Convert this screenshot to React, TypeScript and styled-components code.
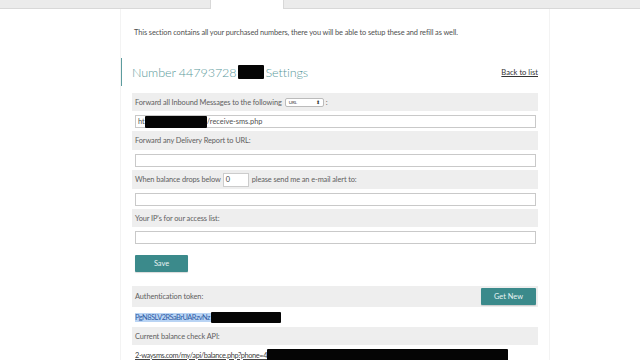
import styled, { createGlobalStyle } from "styled-components";

const GlobalStyle = createGlobalStyle`
  body {
    margin: 0;
    background: #fff;
    font-family: Lato, "Open Sans", sans-serif;
    color: #555;
  }
`;

const TabBar = styled.div`
  display: flex;
  height: 9px;
`;

const Tab = styled.div<{ $active?: boolean; $width?: number }>`
  flex: ${(p) => (p.$width ? `0 0 ${p.$width}px` : "1 1 auto")};
  box-sizing: border-box;
  background: ${(p) => (p.$active ? "#fff" : "#ebebeb")};
  border-bottom: ${(p) => (p.$active ? "none" : "1px solid #d8d8d8")};
  border-left: ${(p) => (p.$active ? "1px solid #d8d8d8" : "none")};
  border-right: ${(p) => (p.$active ? "1px solid #d8d8d8" : "none")};
`;

const Card = styled.div`
  box-sizing: border-box;
  width: 430px;
  margin-left: 120px;
  padding: 0 11px 0 11px;
  border-left: 1px solid #f3f3f3;
  border-right: 1px solid #f3f3f3;
`;

const Intro = styled.p`
  margin: 0;
  padding: 19px 0 0 2px;
  font-size: 7.4px;
  line-height: 10px;
  color: #505050;
  letter-spacing: -0.1px;
`;

const Header = styled.div`
  display: flex;
  align-items: center;
  justify-content: space-between;
  margin: 20px 0 0 -11px;
  padding-left: 10px;
  height: 28px;
  border-left: 1px solid #5c9c9e;
`;

const Title = styled.h2`
  display: flex;
  align-items: center;
  margin: 0;
  font-size: 12.6px;
  font-weight: 300;
  color: #5a999b;
  letter-spacing: -0.1px;
`;

const Redact = styled.span<{ $w: number; $h: number }>`
  display: inline-block;
  width: ${(p) => p.$w}px;
  height: ${(p) => p.$h}px;
  background: #050505;
  border-radius: 1px;
`;

const TitleRedact = styled(Redact)`
  margin: 0 2px 0 1px;
`;

const BackLink = styled.a`
  font-size: 7.6px;
  color: #333;
  text-decoration: underline;
`;

const Form = styled.div`
  display: flex;
  flex-direction: column;
  margin-top: 7px;
`;

const LabelRow = styled.div<{ $h?: number }>`
  display: flex;
  align-items: center;
  justify-content: space-between;
  height: ${(p) => p.$h ?? 18}px;
  padding: 0 2px 0 3px;
  background: #eeeeee;
  font-size: 7.4px;
  color: #606060;
  letter-spacing: -0.1px;
`;

const Inline = styled.span`
  display: flex;
  align-items: center;
`;

const InputRow = styled.div`
  padding: 4px 2px 3px 3px;
`;

const TextBox = styled.div`
  display: flex;
  align-items: center;
  box-sizing: border-box;
  height: 13px;
  padding-left: 2px;
  border: 1px solid #c9c9c9;
  background: #fff;
  font-size: 7.4px;
  color: #505050;
`;

const SelectBox = styled.span`
  display: inline-flex;
  align-items: center;
  justify-content: space-between;
  box-sizing: border-box;
  width: 39px;
  height: 9px;
  margin: 0 2px 0 3px;
  padding: 0 3px;
  border: 1px solid #bbb;
  border-radius: 2px;
  background: #fff;
  font-size: 4.6px;
  color: #333;
`;

const SmallBox = styled.span`
  display: inline-flex;
  align-items: center;
  box-sizing: border-box;
  width: 26px;
  height: 14px;
  margin: 0 3px 0 2px;
  padding-left: 2px;
  border: 1px solid #ccc;
  background: #fff;
  color: #444;
`;

const Button = styled.button<{ $w: number }>`
  width: ${(p) => p.$w}px;
  height: 17px;
  padding: 0;
  border: none;
  border-radius: 1px;
  background: #3b8a8b;
  color: #e8f4f4;
  font-family: Lato, "Open Sans", sans-serif;
  font-size: 7.4px;
  box-shadow: 0 1px 1px rgba(0, 0, 0, 0.15);
`;

const SaveWrap = styled.div`
  padding: 3px 0 14px 3px;
`;

const ValueRow = styled.div`
  display: flex;
  align-items: center;
  height: 20px;
  padding-left: 3px;
  font-size: 7.4px;
`;

const Token = styled.span`
  background: #b9d4f4;
  color: #2f5da6;
  padding-right: 1px;
  letter-spacing: -0.5px;
`;

const ApiLink = styled.span`
  color: #444;
  text-decoration: underline;
  letter-spacing: -0.4px;
`;

export default function App() {
  return (
    <>
      <GlobalStyle />
      <TabBar>
        <Tab $width={210} />
        <Tab $active $width={74} />
        <Tab />
      </TabBar>
      <Card>
        <Intro>
          This section contains all your purchased numbers, there you will be able to setup these and
          refill as well.
        </Intro>
        <Header>
          <Title>
            Number 44793728
            <TitleRedact $w={26} $h={14} />
            Settings
          </Title>
          <BackLink>Back to list</BackLink>
        </Header>
        <Form>
          <LabelRow>
            <Inline>
              Forward all Inbound Messages to the following
              <SelectBox>
                <span>URL</span>
                <span>⬍</span>
              </SelectBox>
              :
            </Inline>
          </LabelRow>
          <InputRow>
            <TextBox>
              ht
              <Redact $w={62} $h={12} />
              /receive-sms.php
            </TextBox>
          </InputRow>
          <LabelRow $h={19}>Forward any Delivery Report to URL:</LabelRow>
          <InputRow>
            <TextBox />
          </InputRow>
          <LabelRow $h={19}>
            <Inline>
              When balance drops below
              <SmallBox>0</SmallBox>
              please send me an e-mail alert to:
            </Inline>
          </LabelRow>
          <InputRow>
            <TextBox />
          </InputRow>
          <LabelRow>Your IP's for our access list:</LabelRow>
          <InputRow>
            <TextBox />
          </InputRow>
          <SaveWrap>
            <Button $w={53}>Save</Button>
          </SaveWrap>
          <LabelRow $h={21}>
            Authentication token:
            <Button $w={55}>Get New</Button>
          </LabelRow>
          <ValueRow>
            <Token>PgN8SLV2RSaBrUARzvNz</Token>
            <Redact $w={70} $h={11} />
          </ValueRow>
          <LabelRow>Current balance check API:</LabelRow>
          <ValueRow>
            <ApiLink>2-waysms.com/my/api/balance.php?phone=4</ApiLink>
            <Redact $w={241} $h={13} />
          </ValueRow>
        </Form>
      </Card>
    </>
  );
}
